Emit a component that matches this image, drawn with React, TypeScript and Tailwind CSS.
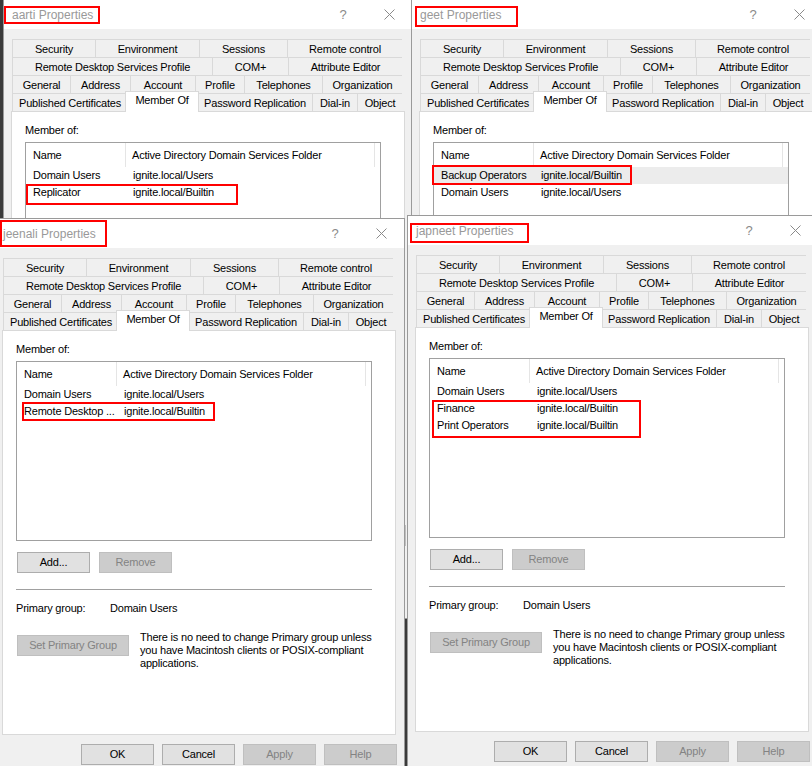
import React from 'react';

type Tab = [string, number];

const TAB_ROWS: Tab[][] = [
  [['Security', 83], ['Environment', 104], ['Sessions', 88], ['Remote control', 115]],
  [['Remote Desktop Services Profile', 200], ['COM+', 76], ['Attribute Editor', 114]],
  [['General', 58], ['Address', 60], ['Account', 65], ['Profile', 49], ['Telephones', 78], ['Organization', 80]],
  [['Published Certificates', 115], ['Member Of', 70], ['Password Replication', 115], ['Dial-in', 45], ['Object', 45]],
];

interface Group {
  name: string;
  folder: string;
}

interface Box {
  x: number;
  y: number;
  w: number;
  h: number;
}

interface DialogProps {
  title: string;
  left: number;
  top: number;
  width: number;
  titleBox: Box;
  groups: Group[];
  highlight?: number;
  listBox: Box;
}

const Button = ({ label, disabled, w = 73 }: { label: string; disabled?: boolean; w?: number }) => (
  <div
    className={`h-[21px] flex items-center justify-center border ${
      disabled ? 'bg-[#cccccc] border-[#bfbfbf] text-[#838383]' : 'bg-[#e1e1e1] border-[#adadad] text-black'
    }`}
    style={{ width: w }}
  >
    {label}
  </div>
);

const TabStrip = () => (
  <div className="ml-px w-[390px] flex flex-col">
    {TAB_ROWS.map((row, ri) => (
      <div key={ri} className="flex h-[18px] border-r border-[#d9d9d9]">
        {row.map(([label, w]) => {
          const selected = label === 'Member Of';
          if (selected) {
            return (
              <div key={label} className="relative shrink-0" style={{ width: w }}>
                <div className="absolute -left-[2px] -right-[2px] -top-[2px] -bottom-[1px] z-10 bg-white border border-b-0 border-[#d9d9d9] flex justify-center pt-[2px] leading-[13px]">
                  {label}
                </div>
              </div>
            );
          }
          return (
            <div
              key={label}
              className="shrink-0 flex items-center justify-center border-l border-t border-[#d9d9d9] bg-[#f0f0f0] whitespace-nowrap leading-[13px] pt-px"
              style={{ width: w }}
            >
              {label}
            </div>
          );
        })}
      </div>
    ))}
  </div>
);

const Dialog = ({ title, left, top, width, titleBox, groups, highlight, listBox }: DialogProps) => (
  <div
    className="absolute bg-[#f0f0f0] border border-[#9a9a9a] flex flex-col h-[620px]"
    style={{ left, top, width }}
  >
    {/* title bar */}
    <div className="relative h-[29px] shrink-0 bg-white flex items-center pl-[8px] text-[12px] tracking-normal text-[#999999]">
      <span>{title}</span>
      <div className="ml-auto flex h-full">
        <div className="w-[46px] flex items-center justify-center text-[13px] text-[#8a8a8a]">?</div>
        <div className="w-[46px] flex items-center justify-center">
          <svg width="11" height="11" viewBox="0 0 11 11">
            <path d="M0.5 0.5 L10.5 10.5 M10.5 0.5 L0.5 10.5" stroke="#8a8a8a" strokeWidth="1" fill="none" />
          </svg>
        </div>
      </div>
      <div
        className="absolute border-2 border-[#ff0000]"
        style={{ left: titleBox.x, top: titleBox.y, width: titleBox.w, height: titleBox.h }}
      />
    </div>

    {/* body */}
    <div className="pt-[10px] pl-[7px] flex flex-col">
      <TabStrip />

      <div className="w-[394px] h-[405px] border border-[#d9d9d9] bg-white flex flex-col pl-[13px] pt-[12px]">
        <div className="leading-[13px]">Member of:</div>

        <div className="relative mt-[5px] w-[356px] h-[180px] border border-[#a0a0a0] flex flex-col">
          <div className="flex h-[24px] shrink-0 items-center">
            <div className="w-[100px] h-full flex items-center pl-[7px] border-r border-[#e5e5e5]">Name</div>
            <div className="w-[249px] h-full flex items-center pl-[6px] border-r border-[#e5e5e5]">
              Active Directory Domain Services Folder
            </div>
          </div>
          {groups.map((g, i) => (
            <div key={g.name} className={`flex h-[17px] items-center ${i === highlight ? 'bg-[#ececec]' : ''}`}>
              <div className="w-[101px] pl-[7px] whitespace-nowrap">{g.name}</div>
              <div className="pl-[6px] whitespace-nowrap">{g.folder}</div>
            </div>
          ))}
          <div
            className="absolute border-2 border-[#ff0000]"
            style={{ left: listBox.x, top: listBox.y, width: listBox.w, height: listBox.h }}
          />
        </div>

        <div className="mt-[11px] ml-px flex gap-[9px]">
          <Button label="Add..." />
          <Button label="Remove" disabled />
        </div>

        <div className="mt-[16px] w-[356px] h-px bg-[#a0a0a0]" />

        <div className="mt-[12px] flex leading-[13px]">
          <div className="w-[94px]">Primary group:</div>
          <div>Domain Users</div>
        </div>

        <div className="mt-[16px] ml-px flex items-start">
          <div className="mt-[4px]">
            <Button label="Set Primary Group" disabled w={112} />
          </div>
          <div className="ml-[11px] leading-[13px]">
            There is no need to change Primary group unless
            <br />
            you have Macintosh clients or POSIX-compliant
            <br />
            applications.
          </div>
        </div>
      </div>

      <div className="mt-[9px] w-[395px] flex justify-end gap-[8px]">
        <Button label="OK" />
        <Button label="Cancel" />
        <Button label="Apply" disabled />
        <Button label="Help" disabled />
      </div>
    </div>
  </div>
);

export default function App() {
  return (
    <div
      className="relative w-[812px] h-[766px] overflow-hidden bg-[#3a3a3a] text-[11px] tracking-[-0.2px] text-black"
      style={{ fontFamily: '"Liberation Sans", Arial, sans-serif' }}
    >
      <Dialog
        title="aarti Properties"
        left={3}
        top={-1}
        width={410}
        titleBox={{ x: 0, y: 6, w: 96, h: 18 }}
        groups={[
          { name: 'Domain Users', folder: 'ignite.local/Users' },
          { name: 'Replicator', folder: 'ignite.local/Builtin' },
        ]}
        listBox={{ x: 0, y: 41, w: 212, h: 21 }}
      />
      <Dialog
        title="geet Properties"
        left={411}
        top={-1}
        width={412}
        titleBox={{ x: 3, y: 6, w: 103, h: 21 }}
        groups={[
          { name: 'Backup Operators', folder: 'ignite.local/Builtin' },
          { name: 'Domain Users', folder: 'ignite.local/Users' },
        ]}
        highlight={0}
        listBox={{ x: -2, y: 22, w: 200, h: 20 }}
      />
      <Dialog
        title="jeenali Properties"
        left={-6}
        top={218}
        width={411}
        titleBox={{ x: 5, y: 1, w: 107, h: 27 }}
        groups={[
          { name: 'Domain Users', folder: 'ignite.local/Users' },
          { name: 'Remote Desktop ...', folder: 'ignite.local/Builtin' },
        ]}
        listBox={{ x: 5, y: 40, w: 193, h: 19 }}
      />
      <Dialog
        title="japneet Properties"
        left={407}
        top={215}
        width={412}
        titleBox={{ x: 2, y: 7, w: 119, h: 20 }}
        groups={[
          { name: 'Domain Users', folder: 'ignite.local/Users' },
          { name: 'Finance', folder: 'ignite.local/Builtin' },
          { name: 'Print Operators', folder: 'ignite.local/Builtin' },
        ]}
        listBox={{ x: 2, y: 41, w: 209, h: 38 }}
      />
    </div>
  );
}
